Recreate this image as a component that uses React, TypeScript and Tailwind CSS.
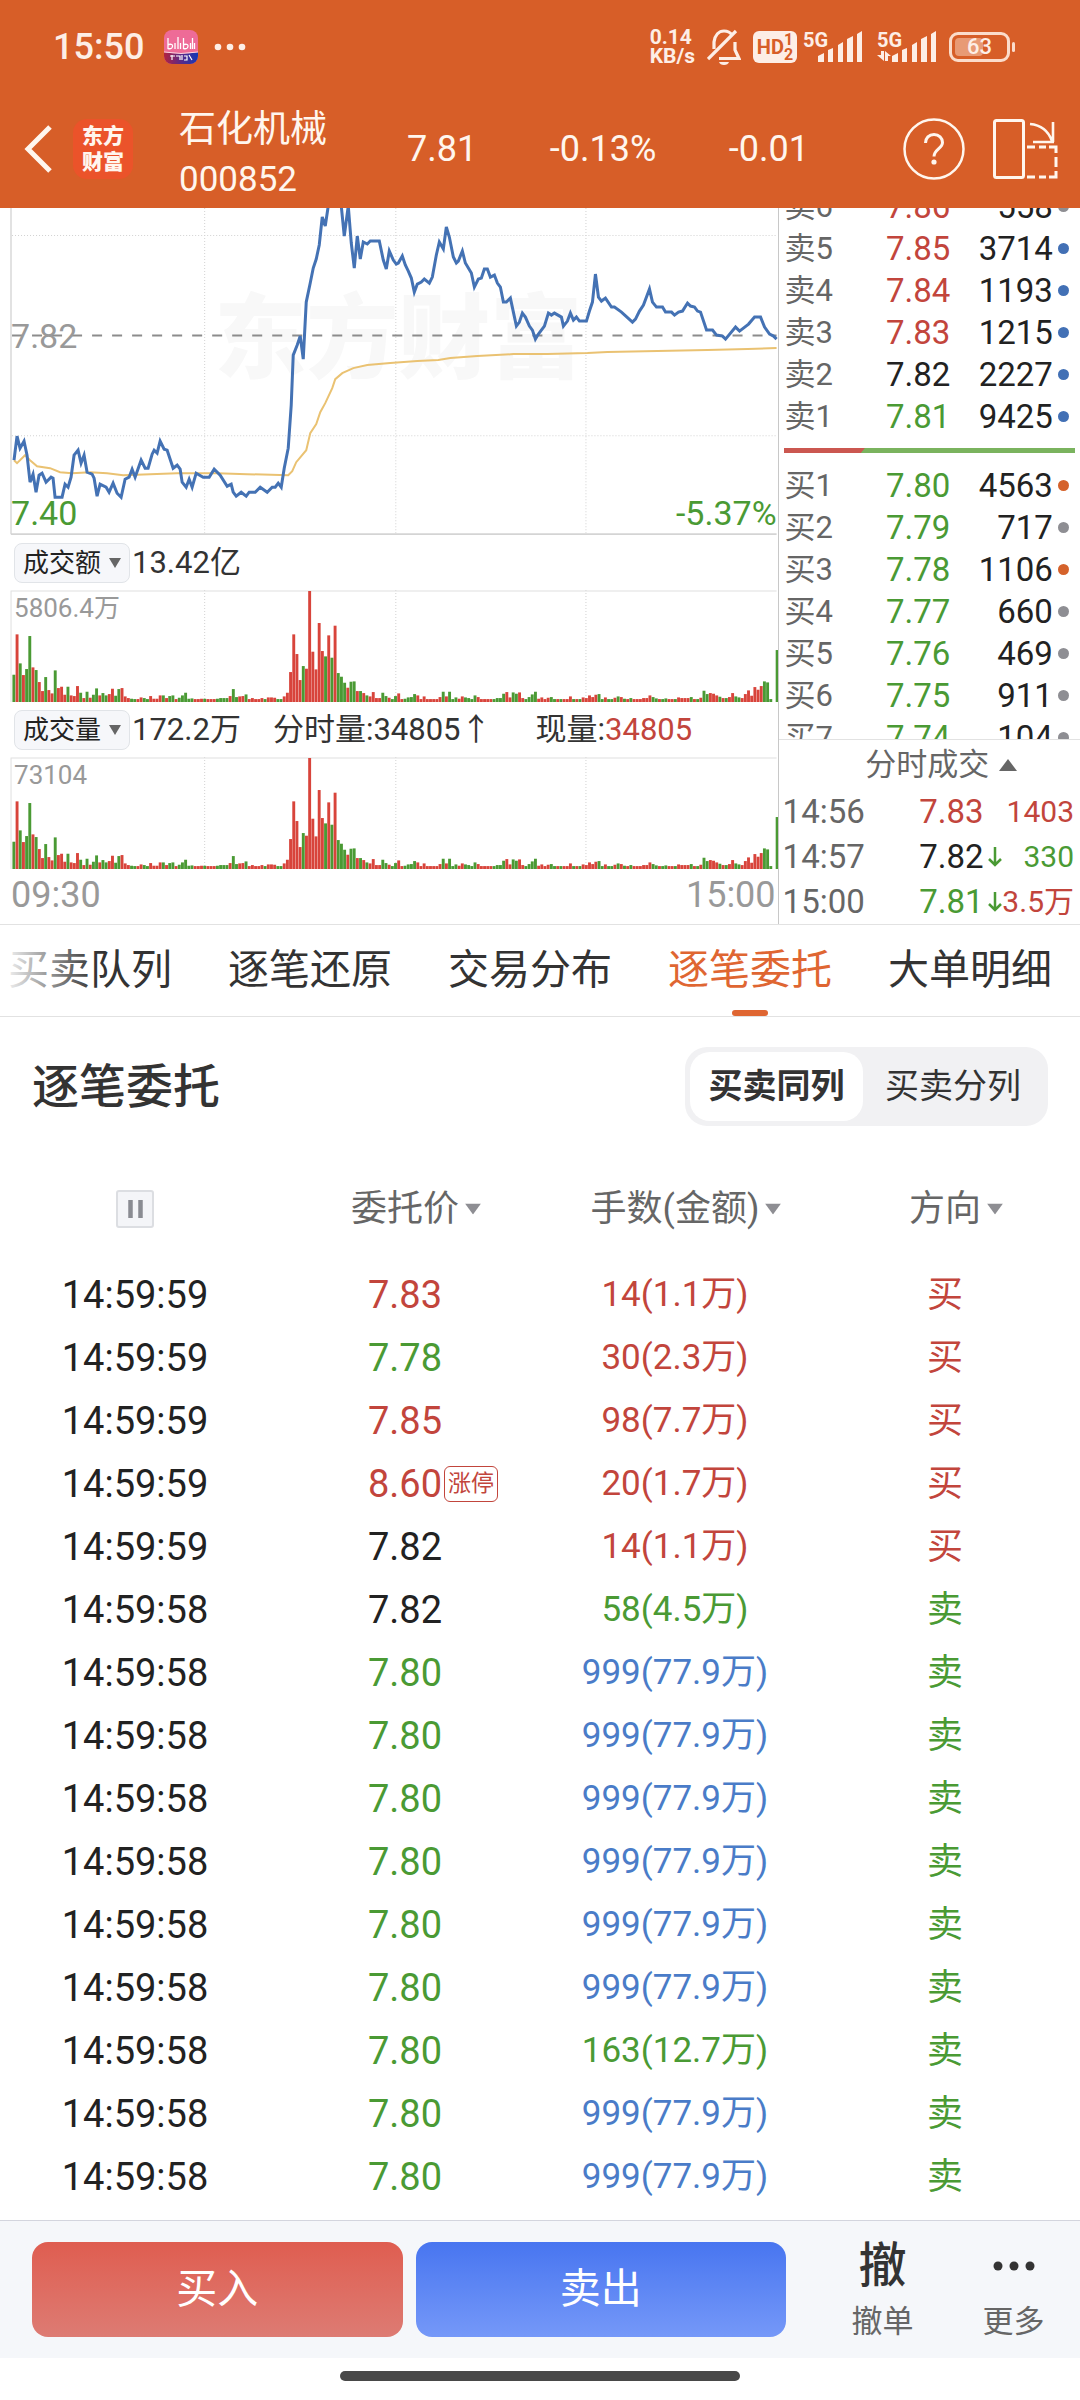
import type { ReactNode } from 'react';
import clsx from 'clsx';

type Tone = 'up' | 'down' | 'flat' | 'big';

const TONES: Record<Tone, string> = {
  up: 'text-[#c2453c]',
  down: 'text-[#4a9a34]',
  flat: 'text-[#222222]',
  big: 'text-[#4a7cc8]',
};

const DOTS = {
  blue: 'bg-[#4270b5]',
  orange: 'bg-[#d5622b]',
  gray: 'bg-[#8e8e93]',
};

interface Level {
  label: string;
  price: string;
  tone: Tone;
  volume: string;
  dot: keyof typeof DOTS;
}

const ASKS: Level[] = [
  { label: '卖6', price: '7.86', tone: 'up', volume: '558', dot: 'gray' },
  { label: '卖5', price: '7.85', tone: 'up', volume: '3714', dot: 'blue' },
  { label: '卖4', price: '7.84', tone: 'up', volume: '1193', dot: 'blue' },
  { label: '卖3', price: '7.83', tone: 'up', volume: '1215', dot: 'blue' },
  { label: '卖2', price: '7.82', tone: 'flat', volume: '2227', dot: 'blue' },
  { label: '卖1', price: '7.81', tone: 'down', volume: '9425', dot: 'blue' },
];

const BIDS: Level[] = [
  { label: '买1', price: '7.80', tone: 'down', volume: '4563', dot: 'orange' },
  { label: '买2', price: '7.79', tone: 'down', volume: '717', dot: 'gray' },
  { label: '买3', price: '7.78', tone: 'down', volume: '1106', dot: 'orange' },
  { label: '买4', price: '7.77', tone: 'down', volume: '660', dot: 'gray' },
  { label: '买5', price: '7.76', tone: 'down', volume: '469', dot: 'gray' },
  { label: '买6', price: '7.75', tone: 'down', volume: '911', dot: 'gray' },
  { label: '买7', price: '7.74', tone: 'down', volume: '104', dot: 'gray' },
];

const TICKS: { time: string; price: string; tone: Tone; falling: boolean; volume: string; volumeTone: Tone }[] = [
  { time: '14:56', price: '7.83', tone: 'up', falling: false, volume: '1403', volumeTone: 'up' },
  { time: '14:57', price: '7.82', tone: 'flat', falling: true, volume: '330', volumeTone: 'down' },
  { time: '15:00', price: '7.81', tone: 'down', falling: true, volume: '3.5万', volumeTone: 'up' },
];

const TABS = ['买卖队列', '逐笔还原', '交易分布', '逐笔委托', '大单明细'];

interface Order {
  time: string;
  price: string;
  priceTone: Tone;
  lots: string;
  lotsTone: Tone;
  side: '买' | '卖';
  limitUp?: boolean;
}

const ORDERS: Order[] = [
  { time: '14:59:59', price: '7.83', priceTone: 'up', lots: '14(1.1万)', lotsTone: 'up', side: '买' },
  { time: '14:59:59', price: '7.78', priceTone: 'down', lots: '30(2.3万)', lotsTone: 'up', side: '买' },
  { time: '14:59:59', price: '7.85', priceTone: 'up', lots: '98(7.7万)', lotsTone: 'up', side: '买' },
  { time: '14:59:59', price: '8.60', priceTone: 'up', lots: '20(1.7万)', lotsTone: 'up', side: '买', limitUp: true },
  { time: '14:59:59', price: '7.82', priceTone: 'flat', lots: '14(1.1万)', lotsTone: 'up', side: '买' },
  { time: '14:59:58', price: '7.82', priceTone: 'flat', lots: '58(4.5万)', lotsTone: 'down', side: '卖' },
  { time: '14:59:58', price: '7.80', priceTone: 'down', lots: '999(77.9万)', lotsTone: 'big', side: '卖' },
  { time: '14:59:58', price: '7.80', priceTone: 'down', lots: '999(77.9万)', lotsTone: 'big', side: '卖' },
  { time: '14:59:58', price: '7.80', priceTone: 'down', lots: '999(77.9万)', lotsTone: 'big', side: '卖' },
  { time: '14:59:58', price: '7.80', priceTone: 'down', lots: '999(77.9万)', lotsTone: 'big', side: '卖' },
  { time: '14:59:58', price: '7.80', priceTone: 'down', lots: '999(77.9万)', lotsTone: 'big', side: '卖' },
  { time: '14:59:58', price: '7.80', priceTone: 'down', lots: '999(77.9万)', lotsTone: 'big', side: '卖' },
  { time: '14:59:58', price: '7.80', priceTone: 'down', lots: '163(12.7万)', lotsTone: 'down', side: '卖' },
  { time: '14:59:58', price: '7.80', priceTone: 'down', lots: '999(77.9万)', lotsTone: 'big', side: '卖' },
  { time: '14:59:58', price: '7.80', priceTone: 'down', lots: '999(77.9万)', lotsTone: 'big', side: '卖' },
];

const PRICE_LINE =
  '14,252 17,228 20,240 24,233 27,247 30,274 33,266 36,284 39,267 42,265 46,274 51,269 53,270 55,289 62,289 65,276 68,279 71,269 74,247 78,242 81,255 84,247 87,264 92,266 94,270 97,288 100,276 106,279 109,284 113,275 117,285 121,289 125,271 129,269 132,261 135,269 141,252 145,260 148,260 152,246 154,242 157,245 160,233 164,241 167,242 173,260 177,257 180,261 182,274 186,279 189,271 192,279 196,265 203,269 209,269 214,261 220,267 227,278 231,276 233,284 236,288 241,284 246,288 249,284 255,284 260,279 267,284 272,279 275,279 278,275 281,279 284,260 288,240 291,197 293,147 297,137 300,128 303,151 306,94 310,75 313,60 316,51 319,37 322,9 325,18 328,-2 333,-20 341,-2 344,28 348,-2 351,35 354,60 357,28 360,51 363,34 367,36 370,33 379,33 383,52 386,61 389,43 393,52 396,56 398,55 402,48 405,57 408,63 411,70 414,84 417,76 421,74 424,71 429,75 432,69 436,47 439,34 443,41 446,19 449,29 453,49 456,55 458,53 462,43 465,55 471,65 474,79 478,71 481,70 484,61 487,61 490,69 494,67 497,75 500,79 503,94 506,94 510,90 513,104 516,118 519,114 522,105 525,109 529,118 532,122 535,131 538,126 544,118 548,105 551,107 554,105 561,109 563,118 567,113 570,105 573,112 576,109 579,113 586,113 589,103 592,94 595,66 598,89 601,93 605,90 611,99 614,99 621,104 632,114 635,111 639,103 643,97 649,81 652,94 656,99 662,99 665,104 671,104 674,107 678,104 682,103 687,95 690,98 694,99 697,103 700,104 706,122 712,122 716,127 722,128 725,131 735,119 739,123 748,116 754,109 760,109 764,119 769,126 773,128 776,131';

const AVERAGE_LINE =
  '14,252 17,255 25,247 30,252 37,258 50,260 60,264 72,265 90,264 107,265 123,267 150,266 177,265 217,265 247,266 288,267 292,263 296,254 306,242 310,225 316,216 320,204 325,195 332,180 335,171 342,165 353,160 367,157 390,155 417,153 438,152 450,150 477,148 513,146 547,146 587,145 607,144 657,143 707,142 747,141 776,140';

// one value per minute, negative = falling minute
const VOLUMES = [
  -82, 203, -116, 81, -99, -198, 104, -96, 60, 33, -75, 36, 26, -95, 42, 46, 22, -46, 20, 18, 48, -28, 12, -31, 13, -22,
  -41, 20, -27, -20, 24, 40, -19, -39, 42, 17, 12, -10, -9, 9, 14, -12, -9, 18, 10, 10, 20, -20, 12, -18, -20, 9, -13,
  -20, -28, -10, -11, 9, 9, 10, -10, 9, 9, 9, -10, -12, -12, -12, 18, -39, -15, 17, 18, -23, 9, 12, 9, 9, 12, -9, 14, 14,
  13, -9, -9, 17, 28, 90, 203, 144, 66, -108, 100, 333, 151, 98, 237, 153, -137, 200, -133, 229, -87, -76, -58, 43, -61,
  -62, 33, -33, 27, -20, 17, 30, 12, 12, -28, -18, 13, -9, -18, 26, 9, -10, -14, -15, -24, 20, 9, 17, 9, 9, 9, 9, 15,
  -31, 17, -31, -9, -14, 10, 17, -14, -12, -9, -20, 15, 9, 9, 9, 9, -9, -12, -12, -25, 30, 14, -29, -25, 29, 12, -9, -15,
  -23, -31, 10, 14, 9, 13, -15, -9, 9, -9, 9, 9, 17, -9, 9, -9, 14, 12, 20, 15, 22, -24, -9, 14, -9, -9, 13, -17, 15,
  -10, 9, -12, 9, 9, 9, 12, 12, 20, -15, -11, 9, -9, -11, 9, 9, -9, 14, 12, 12, 12, -15, 9, -9, 13, -34, -24, 27, 25, 20,
  -16, 12, -12, 15, 27, -17, -14, 12, 24, 35, 19, 45, 37, 48, -62, -59, -9, 0, -156,
];
const VOLUME_PEAK = 333;
const GRID_X = [204, 395, 585];

function StatusBar() {
  return (
    <div className="flex h-[94px] items-center pr-[70px] pl-[53px] text-[#fdeee6]">
      <span className="text-[36px] font-medium leading-none">15:50</span>
      <svg className="ml-5 size-[34px]" viewBox="0 0 34 34" aria-hidden="true">
        <defs>
          <clipPath id="app-badge">
            <rect width="34" height="34" rx="8" />
          </clipPath>
          <linearGradient id="app-badge-base">
            <stop offset="0" stopColor="#b3223f" />
            <stop offset="0.5" stopColor="#5b2a86" />
            <stop offset="1" stopColor="#1238b8" />
          </linearGradient>
        </defs>
        <g clipPath="url(#app-badge)">
          <rect width="34" height="34" fill="#ee6b97" />
          <path d="M0 22q17 3 34 0v12H0z" fill="url(#app-badge-base)" />
          <path d="M0 22q17 3 34 0" fill="none" stroke="#fbd5df" strokeWidth="1" />
          <path
            d="M4 8v10.500q4 1 4.500-2t-4-2M11 13v6M14 7v12M16.500 13v6M19.500 8v10.500q4 1 4.500-2t-4-2M26.500 13v6M28.500 8v11M30.500 13v6"
            fill="none"
            stroke="#fff"
            strokeWidth="1.300"
          />
          <path d="M6 26h5M8 25v5M12 26h4v4M18 25v5M20 26h3v4h-3M25 25l3 5" fill="none" stroke="#fff" strokeWidth="1.200" />
        </g>
      </svg>
      <svg className="ml-4 h-2 w-8" viewBox="0 0 32 8" fill="currentColor" aria-hidden="true">
        <circle cx="4" cy="4" r="3.300" />
        <circle cx="16" cy="4" r="3.300" />
        <circle cx="28" cy="4" r="3.300" />
      </svg>

      <div className="ml-auto flex items-center">
        <div className="text-[21px] font-bold leading-[19px]">
          <div>0.14</div>
          <div>KB/s</div>
        </div>
        <svg className="ml-3 h-9 w-[34px]" viewBox="0 0 34 36" fill="none" stroke="currentColor" strokeWidth="3.200" aria-hidden="true">
          <path d="M7 20v-7C8 6 12 2 17 2c4 0 6 1 8 4" />
          <path d="M28 13v8l4 8.500H12" />
          <path d="M1 30L29 2" />
          <path d="M12 33h10q-1 3-5 3t-5-3z" fill="currentColor" stroke="none" />
        </svg>
        <span className="ml-3 flex h-8 w-11 items-center justify-center rounded-md bg-[#fdeee6] font-bold text-[#d75e28]">
          <span className="text-[20px] leading-none">HD</span>
          <span className="text-[16px] leading-[15px]">
            <span className="block">1</span>
            <span className="block">2</span>
          </span>
        </span>
        <Signal />
        <Signal data />
        <div className="relative ml-3 flex h-[30px] w-[61px] items-center justify-center rounded-[9px] border-[3px] border-[#fbdccb]">
          <span className="absolute inset-y-[3px] left-[3px] w-7 rounded-sm bg-[#e89a75]" />
          <span className="relative text-[22px] font-medium leading-none">63</span>
          <span className="absolute -right-2 h-2.5 w-[3px] rounded-full bg-[#fbdccb]" />
        </div>
      </div>
    </div>
  );
}

function Signal({ data = false }: { data?: boolean }) {
  return (
    <svg
      className={clsx('h-8 w-[60px] overflow-visible', data ? 'ml-3.5' : 'ml-1.5')}
      viewBox="0 0 60 32"
      fill="currentColor"
      aria-label="5G"
    >
      <text x="0" y="16" fontSize="20" fontWeight="700">
        5G
      </text>
      <path d="M15 25l6-3v9h-6zM25 19l5-2v14h-5zM35 14l5-3v20h-5zM44 8l6-3v26h-6zM54 3l5-3v31h-5z" />
      {data && <path d="M4 20h3v10L0 24h4zM8 30V20l6 5h-3v5z" />}
    </svg>
  );
}

function Header() {
  return (
    <header className="bg-[#d75e28] text-[#fff6ee]">
      <StatusBar />
      <div className="flex h-[114px] items-center pr-[22px] pb-1 pl-6">
        <button type="button" aria-label="返回">
          <svg className="h-12 w-7" viewBox="0 0 28 48" fill="none" stroke="currentColor" strokeWidth="5">
            <path d="M26 2L4 24l22 22" />
          </svg>
        </button>
        <div className="ml-[21px] flex size-[60px] flex-col items-center justify-center rounded-[14px] bg-[#eb532a] text-[21px] font-black leading-[26px]">
          <span>东方</span>
          <span>财富</span>
        </div>
        <div className="ml-[46px] pt-3">
          <h1 className="text-[37px] leading-[50px]">石化机械</h1>
          <p className="text-[35px] leading-[50px]">000852</p>
        </div>
        <div className="mr-[94px] ml-20 flex flex-1 justify-between text-[36px]">
          <span>7.81</span>
          <span>-0.13%</span>
          <span>-0.01</span>
        </div>
        <button type="button" aria-label="帮助">
          <svg className="size-[62px]" viewBox="0 0 62 62" fill="none" stroke="currentColor" strokeWidth="2.500">
            <circle cx="31" cy="31" r="29.500" />
            <path d="M22.500 25c0-5 3.500-8.500 8.500-8.500s8.500 3.500 8.500 8c0 6-8.500 7-8.500 14" strokeWidth="3" />
            <circle cx="31" cy="44" r="2.600" fill="currentColor" stroke="none" />
          </svg>
        </button>
        <button type="button" aria-label="横屏" className="ml-7">
          <svg className="h-[60px] w-[65px]" viewBox="0 0 65 60" fill="none" stroke="currentColor" strokeWidth="3">
            <rect x="1.500" y="1.500" width="29" height="57" rx="2" />
            <path d="M37 5c11 1 18 6 22 17M60 3v20M40 23h21" strokeWidth="2.600" />
            <path d="M34 28h8M46 28h7M56 28h7v6M63 38v10M63 52v6h-7M53 58h-7M42 58h-8" />
          </svg>
        </button>
      </div>
    </header>
  );
}

function PriceChart() {
  return (
    <svg className="block w-full" viewBox="0 0 777 327" aria-label="分时走势">
      <text x="214" y="163" fontSize="92" fontWeight="900" fill="#f8f8f8">
        东方财富
      </text>
      <g stroke="#d2d2d2" strokeDasharray="1 2">
        {GRID_X.map((x) => (
          <path key={x} d={`M${x + 0.5} 0v326`} />
        ))}
        <path d="M12 27.500h764M12 227.500h764" />
      </g>
      <path d="M12 127.500h764" stroke="#8c8c8c" strokeWidth="2" strokeDasharray="10 10" />
      <path d="M11 0v326" stroke="#e2e2e2" strokeWidth="2" />
      <path d="M11 326h765" stroke="#d4d4d4" strokeWidth="2" />
      <polyline points={AVERAGE_LINE} fill="none" stroke="#eac272" strokeWidth="2" />
      <polyline points={PRICE_LINE} fill="none" stroke="#4472b4" strokeWidth="3" />
      <g fontSize="34">
        <text x="11" y="140" fill="#999999">
          7.82
        </text>
        <text x="11" y="317" fill="#4a9a34">
          7.40
        </text>
        <text x="776" y="317" fill="#4a9a34" textAnchor="end">
          -5.37%
        </text>
      </g>
    </svg>
  );
}

function VolumeChart({ peak }: { peak: string }) {
  return (
    <svg className="block w-full" viewBox="0 0 777 112" aria-label={`最高 ${peak}`}>
      <g stroke="#d2d2d2" strokeDasharray="1 2">
        {GRID_X.map((x) => (
          <path key={x} d={`M${x + 0.5} 0v112`} />
        ))}
      </g>
      <path d="M11 112V1h765" fill="none" stroke="#e0e0e0" />
      {VOLUMES.map((value, i) => {
        const height = (Math.abs(value) / VOLUME_PEAK) * 111;
        return (
          <rect
            key={i}
            x={12.4 + i * 3.178}
            y={112 - height}
            width="2.900"
            height={height}
            fill={value > 0 ? '#d8443b' : '#4a9a34'}
          />
        );
      })}
      <text x="14" y="27" fontSize="26" fill="#999999">
        {peak}
      </text>
    </svg>
  );
}

function IndicatorRow({ name, children }: { name: string; children: ReactNode }) {
  return (
    <div className="flex h-[55px] items-center pl-3.5 text-[31px] leading-none whitespace-nowrap text-[#333333]">
      <button
        type="button"
        className="mr-0.5 flex h-10 items-center gap-2 rounded-lg border border-[#e1e4e8] bg-[#f6f7fa] px-2 text-[26px] text-[#222222]"
      >
        {name}
        <svg className="h-2.5 w-3" viewBox="0 0 12 10" fill="#666666" aria-hidden="true">
          <path d="M0 0h12L6 10z" />
        </svg>
      </button>
      {children}
    </div>
  );
}

function LevelTable({ levels }: { levels: Level[] }) {
  return (
    <table className="w-full table-fixed text-[33px] leading-none">
      <colgroup>
        <col className="w-[24%]" />
        <col className="w-[33%]" />
        <col className="w-[34%]" />
        <col className="w-[9%]" />
      </colgroup>
      <tbody>
        {levels.map((level) => (
          <tr key={level.label} className="h-[42px]">
            <th scope="row" className="p-0 pl-1.5 text-left text-[31px] font-normal whitespace-nowrap text-[#666666]">
              {level.label}
            </th>
            <td className={clsx('p-0 text-right', TONES[level.tone])}>{level.price}</td>
            <td className="p-0 text-right text-[#222222]">{level.volume}</td>
            <td className="p-0 pl-[5px]">
              <span className={clsx('block size-[11px] rounded-full', DOTS[level.dot])} />
            </td>
          </tr>
        ))}
      </tbody>
    </table>
  );
}

function OrderBook() {
  return (
    <aside className="flex flex-col border-l border-[#c8c8c8]">
      <div className="flex h-[531px] flex-col justify-center overflow-hidden pb-1">
        <LevelTable levels={ASKS} />
        <div className="flex h-[27px] shrink-0 items-center px-[5px]">
          <svg className="h-[5px] w-full" viewBox="0 0 292 5" preserveAspectRatio="none" aria-hidden="true">
            <rect width="292" height="5" fill="#7ab35e" />
            <path d="M0 0h81l-4 5H0z" fill="#cb5750" />
          </svg>
        </div>
        <LevelTable levels={BIDS} />
      </div>
      <button
        type="button"
        className="flex h-[50px] items-center justify-center gap-2.5 border-t border-[#e2e2e2] pl-6 text-[31px] leading-none text-[#666666]"
      >
        分时成交
        <svg className="h-3 w-[18px]" viewBox="0 0 18 12" fill="currentColor" aria-hidden="true">
          <path d="M0 12L9 0l9 12z" />
        </svg>
      </button>
      <table className="w-full table-fixed text-[33px] leading-none">
        <colgroup>
          <col className="w-[34%]" />
          <col className="w-[34%]" />
          <col className="w-[6%]" />
          <col className="w-[26%]" />
        </colgroup>
        <tbody>
          {TICKS.map((tick) => (
            <tr key={tick.time} className="h-[45px]">
              <td className="p-0 pl-1 text-[#666666]">{tick.time}</td>
              <td className={clsx('p-0 text-right', TONES[tick.tone])}>{tick.price}</td>
              <td className="p-0 text-[#4a9a34]">
                {tick.falling && (
                  <svg className="ml-1 h-5 w-3.5" viewBox="0 0 14 20" fill="none" stroke="currentColor" strokeWidth="2.500" aria-label="跌">
                    <path d="M7 0v18M1 12l6 6 6-6" />
                  </svg>
                )}
              </td>
              <td className={clsx('p-0 pr-1.5 text-right text-[30px] whitespace-nowrap', TONES[tick.volumeTone])}>
                {tick.volume}
              </td>
            </tr>
          ))}
        </tbody>
      </table>
    </aside>
  );
}

function Quote() {
  return (
    <section className="grid grid-cols-[72fr_28fr] border-b border-[#e2e2e2]">
      <div className="min-w-0">
        <PriceChart />
        <IndicatorRow name="成交额">
          <span>13.42亿</span>
        </IndicatorRow>
        <VolumeChart peak="5806.4万" />
        <IndicatorRow name="成交量">
          <span>172.2万</span>
          <span className="ml-8">分时量:34805↑</span>
          <span className="ml-11">
            现量:<span className={TONES.up}>34805</span>
          </span>
        </IndicatorRow>
        <VolumeChart peak="73104" />
        <div className="flex h-[52px] items-center justify-between pr-0.5 pl-[11px] text-[36px] leading-none text-[#999999]">
          <span>09:30</span>
          <span>15:00</span>
        </div>
      </div>
      <OrderBook />
    </section>
  );
}

function Tabs() {
  return (
    <nav className="relative flex h-[92px] justify-between overflow-hidden border-b border-[#e2e2e2] pr-7 pl-2 text-[41px] whitespace-nowrap text-[#333333]">
      {TABS.map((tab) => {
        const active = tab === '逐笔委托';
        return (
          <button key={tab} type="button" className={clsx('relative', active && 'text-[#df6632]')}>
            {tab}
            {active && <span className="absolute bottom-0 left-1/2 h-1.5 w-9 -translate-x-1/2 rounded-full bg-[#df6632]" />}
          </button>
        );
      })}
      <span className="pointer-events-none absolute inset-y-0 left-0 w-24 bg-linear-to-r from-white to-transparent" />
    </nav>
  );
}

function SortHeader({ children }: { children: ReactNode }) {
  return (
    <th scope="col" className="p-0 font-normal">
      <button type="button" className="relative">
        {children}
        <svg className="absolute top-1/2 left-full ml-1.5 h-[11px] w-4 -translate-y-1/2" viewBox="0 0 16 11" fill="#8e8e93" aria-hidden="true">
          <path d="M0 0h16L8 11z" />
        </svg>
      </button>
    </th>
  );
}

function OrderFlow() {
  return (
    <section className="flex-1 bg-white">
      <div className="flex h-[138px] items-center justify-between pr-8 pl-8">
        <h2 className="text-[47px] font-medium leading-none text-[#333333]">逐笔委托</h2>
        <div className="flex h-[79px] rounded-[22px] bg-[#f1f1f3] p-[5px] text-[34px] text-[#333333]">
          <button type="button" aria-pressed="true" className="w-[173px] rounded-[20px] bg-white font-bold">
            买卖同列
          </button>
          <button type="button" aria-pressed="false" className="w-[180px]">
            买卖分列
          </button>
        </div>
      </div>
      <table className="w-full table-fixed text-center text-[38px] leading-none">
        <thead>
          <tr className="h-[108px] text-[36px] text-[#666666]">
            <th scope="col" className="p-0">
              <button type="button" aria-label="暂停" className="mx-auto block">
                <svg className="size-[38px]" viewBox="0 0 38 38">
                  <rect x="1" y="1" width="36" height="36" rx="2" fill="#f4f5f8" stroke="#dcdee2" strokeWidth="2" />
                  <path d="M14.500 10v18M24.500 10v18" stroke="#8a8c92" strokeWidth="4.500" />
                </svg>
              </button>
            </th>
            <SortHeader>委托价</SortHeader>
            <SortHeader>手数(金额)</SortHeader>
            <SortHeader>方向</SortHeader>
          </tr>
        </thead>
        <tbody>
          {ORDERS.map((order, i) => (
            <tr key={i} className="h-[63px]">
              <td className="p-0 text-[#222222]">{order.time}</td>
              <td className={clsx('p-0', TONES[order.priceTone])}>
                <span className="relative">
                  {order.price}
                  {order.limitUp && (
                    <span className="absolute top-1/2 left-full ml-0.5 flex h-9 -translate-y-1/2 items-center rounded-md border border-[#c2453c] px-[3px] text-[23px] whitespace-nowrap">
                      涨停
                    </span>
                  )}
                </span>
              </td>
              <td className={clsx('p-0 text-[35px]', TONES[order.lotsTone])}>{order.lots}</td>
              <td className={clsx('p-0 text-[36px]', order.side === '买' ? TONES.up : TONES.down)}>{order.side}</td>
            </tr>
          ))}
        </tbody>
      </table>
    </section>
  );
}

function TradeBar() {
  return (
    <footer>
      <div className="flex h-[138px] items-center border-t border-[#d3d5de] bg-[#f5f7fa] pr-px pl-8">
        <div className="flex flex-1 gap-[13px] text-[41px] text-white">
          <button type="button" className="h-[95px] flex-1 rounded-2xl bg-linear-to-b from-[#df5d50] to-[#dd7b73]">
            买入
          </button>
          <button type="button" className="h-[95px] flex-1 rounded-2xl bg-linear-to-b from-[#4875f0] to-[#7598f8]">
            卖出
          </button>
        </div>
        <div className="ml-[31px] grid grid-cols-2 text-[31px] leading-none text-[#666666]">
          <button type="button" className="flex w-[131px] flex-col items-center gap-4">
            <span className="text-[48px] font-medium text-[#333333]">撤</span>
            撤单
          </button>
          <button type="button" className="flex w-[131px] flex-col items-center gap-4">
            <svg className="h-12 w-[42px]" viewBox="0 0 42 48" fill="#333333" aria-hidden="true">
              <circle cx="5" cy="24" r="4.500" />
              <circle cx="21" cy="24" r="4.500" />
              <circle cx="37" cy="24" r="4.500" />
            </svg>
            更多
          </button>
        </div>
      </div>
      <div className="flex h-[42px] items-center justify-center bg-white pb-1.5">
        <span className="h-2.5 w-[37%] rounded-full bg-[#484848]" />
      </div>
    </footer>
  );
}

export default function App() {
  return (
    <div className="flex min-h-screen flex-col bg-white font-['Roboto','Noto_Sans_CJK_SC',sans-serif]">
      <Header />
      <Quote />
      <Tabs />
      <OrderFlow />
      <TradeBar />
    </div>
  );
}
